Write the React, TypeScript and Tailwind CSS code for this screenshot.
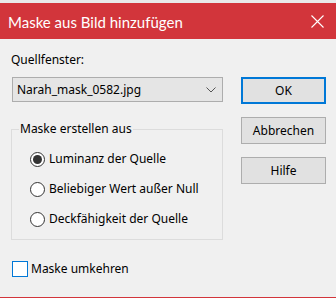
const font = { fontFamily: '"Noto Sans", "Liberation Sans", sans-serif' };

const Radio = ({ label, checked }: { label: string; checked?: boolean }) => (
  <div className="flex items-center h-[30px]">
    <span className="w-[15px] h-[15px] rounded-full border border-[#333] bg-white flex items-center justify-center">
      {checked && <span className="w-[9px] h-[9px] rounded-full bg-[#333]" />}
    </span>
    <span className="ml-[4px] text-[12px] leading-[16px] text-black">{label}</span>
  </div>
);

const Button = ({ label, focused }: { label: string; focused?: boolean }) => (
  <button
    className={
      focused
        ? "h-[27px] w-[85px] border-2 border-[#0078d7] bg-[#e1e1e1] text-[12px] text-black"
        : "h-[27px] w-[85px] border border-[#adadad] bg-[#e1e1e1] text-[12px] text-black"
    }
  >
    {label}
  </button>
);

export default function App() {
  return (
    <div className="w-[336px] h-[298px] bg-[#f0f0f0] flex flex-col overflow-hidden" style={font}>
      <div className="h-[3px] bg-[#e9e9e9]" />
      <div className="h-[36px] bg-[#d2353b] flex items-center justify-between pl-[8px] pr-[12px]">
        <span className="text-[15px] leading-[20px] text-white pt-[2px]" style={{ fontFamily: 'Lato, "Liberation Sans", sans-serif' }}>
          Maske aus Bild hinzufügen
        </span>
        <svg width="13" height="13" viewBox="0 0 13 13" fill="none" stroke="white" strokeWidth="1.1">
          <path d="M0.5 0.5 L12.5 12.5 M12.5 0.5 L0.5 12.5" />
        </svg>
      </div>

      <div className="flex flex-1">
        <div className="ml-[12px] w-[211px] flex flex-col">
          <div className="mt-[13px] text-[12px] leading-[16px] text-black -ml-[1px]">Quellfenster:</div>
          <div className="mt-[9px] h-[25px] border border-[#adadad] bg-[#e5e5e5] flex items-center justify-between pl-[4px] pr-[6px]">
            <span className="text-[12px] text-black">Narah_mask_0582.jpg</span>
            <svg width="10" height="6" viewBox="0 0 10 6" fill="none" stroke="#555" strokeWidth="1">
              <path d="M0.5 0.5 L5 5 L9.5 0.5" />
            </svg>
          </div>

          <fieldset className="mt-[19px] -ml-[1px] h-[119px] border border-[#dcdcdc] pl-[18px] pt-[7px]">
            <legend className="-ml-[11px] px-[1px] text-[12px] leading-[16px] text-black">Maske erstellen aus</legend>
            <Radio label="Luminanz der Quelle" checked />
            <Radio label="Beliebiger Wert außer Null" />
            <Radio label="Deckfähigkeit der Quelle" />
          </fieldset>

          <div className="mt-[21px] flex items-center">
            <span className="w-[16px] h-[16px] border border-[#0078d7] bg-white" />
            <span className="ml-[3px] text-[12px] leading-[16px] text-black">Maske umkehren</span>
          </div>
        </div>

        <div className="ml-[18px] pt-[38px] flex flex-col gap-[13px]">
          <Button label="OK" focused />
          <Button label="Abbrechen" />
          <Button label="Hilfe" />
        </div>
      </div>

      <div className="h-[1px] bg-[#d2353b]" />
    </div>
  );
}
